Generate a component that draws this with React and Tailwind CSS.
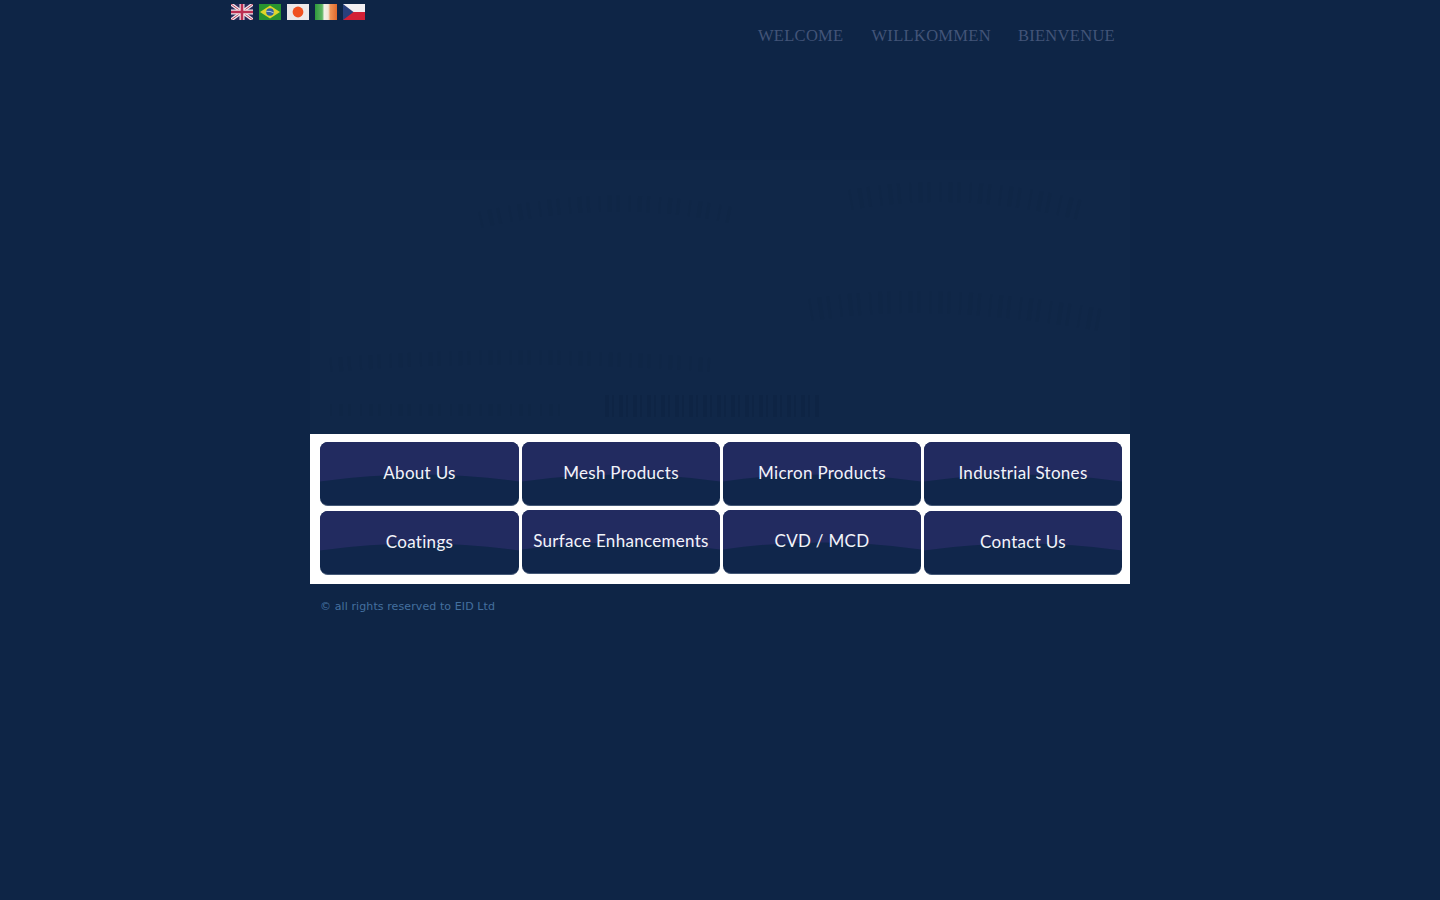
const FlagUK = () => (
  <svg width="22" height="16" viewBox="0 0 22 16">
    <rect width="22" height="16" fill="#2b2a5a" />
    <path d="M0 0L22 16M22 0L0 16" stroke="#efe6ea" strokeWidth="3.4" />
    <path d="M0 0L22 16M22 0L0 16" stroke="#b93a58" strokeWidth="1" />
    <path d="M11 0V16M0 8H22" stroke="#efe6ea" strokeWidth="5" />
    <path d="M11 0V16M0 8H22" stroke="#bb2f52" strokeWidth="2.6" />
  </svg>
);

const FlagBR = () => (
  <svg width="22" height="16" viewBox="0 0 22 16">
    <rect width="22" height="16" fill="#27932f" />
    <path d="M11 1.5L21 8L11 14.5L1 8Z" fill="#dfd52a" />
    <circle cx="11" cy="8" r="3.8" fill="#2f62a0" />
    <path d="M7.4 7.4Q11 6.8 14.6 8.8" stroke="#cfe0ea" strokeWidth="0.8" fill="none" />
  </svg>
);

const FlagJP = () => (
  <svg width="22" height="16" viewBox="0 0 22 16">
    <rect width="22" height="16" fill="#ece8e8" />
    <circle cx="11" cy="8" r="5.4" fill="#f0501f" />
  </svg>
);

const FlagIE = () => (
  <svg width="22" height="16" viewBox="0 0 22 16">
    <defs>
      <linearGradient id="ie" x1="0" x2="1" y1="0" y2="0">
        <stop offset="0" stopColor="#2e9a3c" />
        <stop offset="0.33" stopColor="#5fb562" />
        <stop offset="0.42" stopColor="#f2f1e8" />
        <stop offset="0.6" stopColor="#f2e6d6" />
        <stop offset="0.7" stopColor="#ee9355" />
        <stop offset="1" stopColor="#e0692c" />
      </linearGradient>
    </defs>
    <rect width="22" height="16" fill="url(#ie)" />
  </svg>
);

const FlagCZ = () => (
  <svg width="22" height="16" viewBox="0 0 22 16">
    <rect width="22" height="8" fill="#f2eff2" />
    <rect y="8" width="22" height="8" fill="#d31f35" />
    <path d="M0 0L10.5 8L0 16Z" fill="#283f7c" />
  </svg>
);

const rowOne = ['About Us', 'Mesh Products', 'Micron Products', 'Industrial Stones'];
const rowTwo = ['Coatings', 'Surface Enhancements', 'CVD / MCD', 'Contact Us'];

// one image-like button with the curved sheen
const NavButton = ({ label, className }) => (
  <a className={`relative flex h-16 items-center justify-center overflow-hidden rounded-lg border-b border-[#465a78] bg-[#10264b] ${className || ''}`}>
    <svg className="absolute inset-0 h-full w-full" viewBox="0 0 198 64" preserveAspectRatio="none">
      <path d="M0 0H198V40Q99 26 0 40Z" fill="#222b60" />
    </svg>
    <span className="relative -mt-0.5 font-['Lato',sans-serif] text-[17px] tracking-[0.3px] text-[#f2f4fa]">{label}</span>
  </a>
);

export default function App() {
  return (
    <div className="min-h-[900px] bg-[#0e2546]">
      <div className="ml-[231px] w-[899px]">
        {/* Language flags and greetings */}
        <div className="flex h-[160px] items-start justify-between">
          <div className="flex gap-1.5 pt-1">
            <FlagUK />
            <FlagBR />
            <FlagJP />
            <FlagIE />
            <FlagCZ />
          </div>
          <div className="flex pt-[26px] pr-[15px] font-['Liberation_Serif',serif] text-[16.5px] leading-5 tracking-[0.3px] text-[#425478]">
            <span className="mr-[28px]">WELCOME</span>
            <span className="mr-[27px]">WILLKOMMEN</span>
            <span>BIENVENUE</span>
          </div>
        </div>
      </div>

      <div className="ml-[310px] w-[820px]">
        {/* Faint hero picture */}
        <div className="h-[274px] bg-[#102748]">
          <svg className="h-full w-full" viewBox="0 0 820 274" opacity="0.3">
            <g stroke="#0e2443" fill="none" strokeDasharray="2 7 4 5 3 9">
              <path d="M170 60Q300 30 420 55" strokeWidth="16" />
              <path d="M540 40Q650 20 770 50" strokeWidth="20" />
              <path d="M500 150Q620 130 790 160" strokeWidth="22" />
              <path d="M20 205Q200 190 400 205" strokeWidth="14" />
              <path d="M20 250H250" strokeWidth="12" />
            </g>
            <path d="M295 246H510" stroke="#0a1e3b" strokeWidth="22" strokeDasharray="4 3 2 5" fill="none" />
          </svg>
        </div>

        {/* Navigation buttons */}
        <div className="h-[150px] bg-white pt-2 pl-2.5">
          <div className="grid grid-cols-[199px_198px_198px_198px] gap-x-[3px]">
            {rowOne.map((label) => (
              <NavButton key={label} label={label} />
            ))}
          </div>
          <div className="mt-[4px] grid grid-cols-[199px_198px_198px_198px] gap-x-[3px]">
            {rowTwo.map((label, i) => (
              <NavButton key={label} label={label} className={i === 0 || i === 3 ? 'mt-px' : ''} />
            ))}
          </div>
        </div>

        <p className="mt-4 pl-2.5 font-['DejaVu_Sans',sans-serif] text-[11px] leading-[14px] tracking-[0.1px] text-[#44709f]">
          © all rights reserved to EID Ltd
        </p>
      </div>
    </div>
  );
}
